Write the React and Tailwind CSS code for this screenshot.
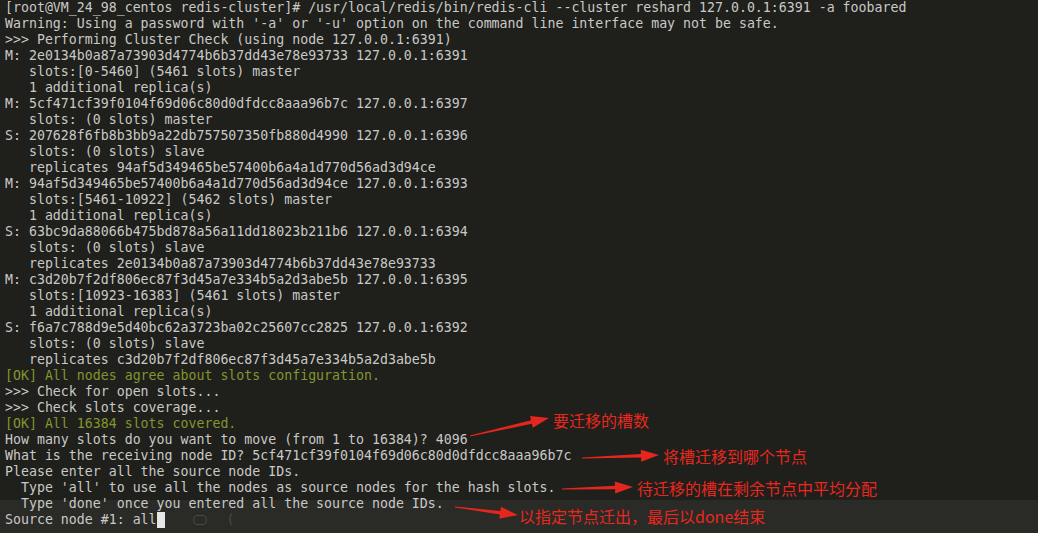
import React from "react";

const lines = [
  { t: "[root@VM_24_98_centos redis-cluster]# /usr/local/redis/bin/redis-cli --cluster reshard 127.0.0.1:6391 -a foobared" },
  { t: "Warning: Using a password with '-a' or '-u' option on the command line interface may not be safe." },
  { t: ">>> Performing Cluster Check (using node 127.0.0.1:6391)" },
  { t: "M: 2e0134b0a87a73903d4774b6b37dd43e78e93733 127.0.0.1:6391" },
  { t: "   slots:[0-5460] (5461 slots) master" },
  { t: "   1 additional replica(s)" },
  { t: "M: 5cf471cf39f0104f69d06c80d0dfdcc8aaa96b7c 127.0.0.1:6397" },
  { t: "   slots: (0 slots) master" },
  { t: "S: 207628f6fb8b3bb9a22db757507350fb880d4990 127.0.0.1:6396" },
  { t: "   slots: (0 slots) slave" },
  { t: "   replicates 94af5d349465be57400b6a4a1d770d56ad3d94ce" },
  { t: "M: 94af5d349465be57400b6a4a1d770d56ad3d94ce 127.0.0.1:6393" },
  { t: "   slots:[5461-10922] (5462 slots) master" },
  { t: "   1 additional replica(s)" },
  { t: "S: 63bc9da88066b475bd878a56a11dd18023b211b6 127.0.0.1:6394" },
  { t: "   slots: (0 slots) slave" },
  { t: "   replicates 2e0134b0a87a73903d4774b6b37dd43e78e93733" },
  { t: "M: c3d20b7f2df806ec87f3d45a7e334b5a2d3abe5b 127.0.0.1:6395" },
  { t: "   slots:[10923-16383] (5461 slots) master" },
  { t: "   1 additional replica(s)" },
  { t: "S: f6a7c788d9e5d40bc62a3723ba02c25607cc2825 127.0.0.1:6392" },
  { t: "   slots: (0 slots) slave" },
  { t: "   replicates c3d20b7f2df806ec87f3d45a7e334b5a2d3abe5b" },
  { t: "[OK] All nodes agree about slots configuration.", ok: true },
  { t: ">>> Check for open slots..." },
  { t: ">>> Check slots coverage..." },
  { t: "[OK] All 16384 slots covered.", ok: true },
  { t: "How many slots do you want to move (from 1 to 16384)? 4096" },
  { t: "What is the receiving node ID? 5cf471cf39f0104f69d06c80d0dfdcc8aaa96b7c" },
  { t: "Please enter all the source node IDs." },
  { t: "  Type 'all' to use all the nodes as source nodes for the hash slots." },
  { t: "  Type 'done' once you entered all the source node IDs." },
];

// tapered arrow: thin tail, widening shaft, triangular head
const arrowPoints = (x1, y1, x2, y2, head = 18, hw = 6) => {
  const dx = x2 - x1;
  const dy = y2 - y1;
  const len = Math.hypot(dx, dy);
  const ux = dx / len;
  const uy = dy / len;
  const nx = -uy;
  const ny = ux;
  const bx = x2 - ux * head;
  const by = y2 - uy * head;
  const tail = 0.4;
  const neck = 1.8;
  const p = [
    [x1 + nx * tail, y1 + ny * tail],
    [bx + nx * neck, by + ny * neck],
    [bx + nx * hw, by + ny * hw],
    [x2, y2],
    [bx - nx * hw, by - ny * hw],
    [bx - nx * neck, by - ny * neck],
    [x1 - nx * tail, y1 - ny * tail],
  ];
  return p.map((q) => q.map((v) => v.toFixed(1)).join(",")).join(" ");
};

const arrows = [
  [470, 436, 549, 418],
  [582, 458, 659, 455],
  [562, 489, 633, 487],
  [455, 507, 518, 515],
];

const notes = [
  { text: "要迁移的槽数", cls: "left-[553px] top-[410px]" },
  { text: "将槽迁移到哪个节点", cls: "left-[663px] top-[446px]" },
  { text: "待迁移的槽在剩余节点中平均分配", cls: "left-[637px] top-[478px]" },
  { text: "以指定节点迁出，最后以done结束", cls: "left-[519px] top-[506px]" },
];

export default function App() {
  return (
    <div className="relative h-screen w-full overflow-hidden bg-[linear-gradient(to_bottom,#1f1f1c_500px,#2a2a26_500px)]">
      <div className="pl-[5px] font-['DejaVu_Sans_Mono',monospace] text-[13.25px] leading-4 text-[#c9c9c6]">
        {lines.map((l, i) => (
          <div key={i} className={`whitespace-pre ${l.ok ? "text-[#82962f]" : ""}`}>
            {l.t}
          </div>
        ))}
        <div className="flex items-center whitespace-pre">
          <span>Source node #1: all</span>
          <span className="h-4 w-2 bg-[#e6e6e6]"></span>
          <span className="ml-7 h-[10px] w-[14px] rounded-sm border border-[#4a4a46]"></span>
          <span className="ml-5 text-[#4a4a46]">(</span>
        </div>
      </div>

      <svg className="absolute inset-0 h-full w-full pointer-events-none" viewBox="0 0 1038 533">
        {arrows.map((a, i) => (
          <polygon key={i} points={arrowPoints(...a)} fill="#e3261e" />
        ))}
      </svg>

      {notes.map((n, i) => (
        <span
          key={i}
          className={`absolute ${n.cls} whitespace-nowrap font-['Noto_Sans_CJK_SC',sans-serif] text-base leading-5 text-[#e8281f]`}
        >
          {n.text}
        </span>
      ))}
    </div>
  );
}
